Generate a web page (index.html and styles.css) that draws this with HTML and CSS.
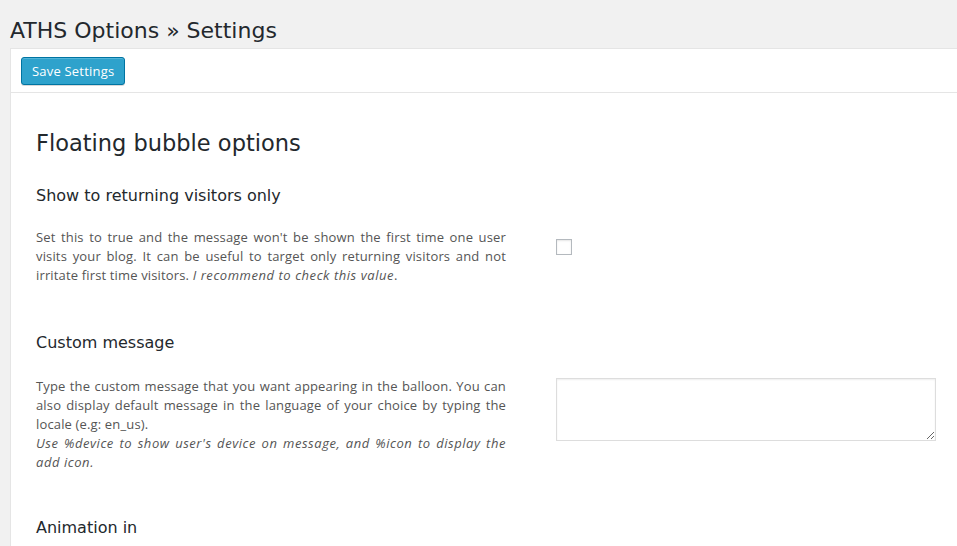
FILE: index.html
```html
<!DOCTYPE html>
<html>
<head>
<meta charset="utf-8">
<link rel="stylesheet" href="styles.css">
</head>
<body>
<div class="wrap">
  <h1 class="page-title">ATHS Options » Settings</h1>
  <div class="panel">
    <div class="toolbar">
      <button class="btn-primary">Save Settings</button>
    </div>
    <div class="content">
      <h2 class="section-title">Floating bubble options</h2>

      <h3 class="option-title">Show to returning visitors only</h3>
      <div class="option-row option-row-first">
        <p class="desc">Set this to true and the message won't be shown the first time one user visits your blog. It can be useful to target only returning visitors and not irritate first time visitors. <em>I recommend to check this value</em>.</p>
        <div class="control"><span class="checkbox"></span></div>
      </div>

      <h3 class="option-title option-title-spaced">Custom message</h3>
      <div class="option-row">
        <p class="desc">Type the custom message that you want appearing in the balloon. You can also display default message in the language of your choice by typing the locale (e.g: en_us).<br><em>Use %device to show user's device on message, and %icon to display the add icon.</em></p>
        <div class="control"><textarea class="textarea"></textarea></div>
      </div>

      <h3 class="option-title">Animation in</h3>
    </div>
  </div>
</div>
</body>
</html>
```

FILE: styles.css
```css
html, body {
  margin: 0;
  padding: 0;
  background: #f1f1f1;
  overflow: hidden;
}
body {
  font-family: "Open Sans", "Noto Sans", sans-serif;
  color: #444;
}
.wrap {
  padding-left: 10px;
}
.page-title {
  margin: 0;
  padding: 16px 0 3px 0;
  font-family: "DejaVu Sans", sans-serif;
  font-weight: 400;
  font-size: 22px;
  line-height: 29px;
  color: #23282d;
}
.panel {
  background: #fff;
  border-top: 1px solid #e5e5e5;
  border-left: 1px solid #e5e5e5;
  min-height: 600px;
}
.toolbar {
  padding: 8px 10px 7px 10px;
  border-bottom: 1px solid #e5e5e5;
}
.btn-primary {
  display: block;
  height: 28px;
  padding: 0 10px;
  background: #2ea2cc;
  border: 1px solid #0074a2;
  border-radius: 3px;
  box-shadow: inset 0 1px 0 rgba(120,200,230,0.5), 0 1px 0 rgba(0,0,0,0.15);
  color: #fff;
  font-family: "Open Sans", "Noto Sans", sans-serif;
  font-size: 13px;
  letter-spacing: 0.2px;
  line-height: 26px;
}
.content {
  padding: 35px 25px 0 25px;
}
.section-title {
  margin: 0 0 28px 0;
  font-family: "DejaVu Sans", sans-serif;
  font-weight: 400;
  font-size: 22.5px;
  line-height: 30px;
  color: #23282d;
}
.option-title {
  margin: 0 0 22px 0;
  font-family: "DejaVu Sans", sans-serif;
  font-weight: 400;
  font-size: 16px;
  line-height: 20px;
  color: #23282d;
}
.option-title-spaced {
  margin-bottom: 24px;
}
.option-row {
  display: grid;
  grid-template-columns: 470px 380px;
  column-gap: 50px;
  margin-bottom: 46px;
}
.option-row-first {
  margin-bottom: 48px;
}
.desc {
  margin: 0;
  font-size: 13px;
  letter-spacing: 0.15px;
  line-height: 19px;
  text-align: justify;
  color: #555;
}
.desc em {
  letter-spacing: 0.55px;
}
.control {
  padding-top: 11px;
}
.checkbox {
  display: block;
  width: 14px;
  height: 14px;
  border: 1px solid #b4b9be;
  background: #fff;
  box-shadow: inset 0 1px 2px rgba(0,0,0,0.1);
}
.textarea {
  display: block;
  box-sizing: border-box;
  width: 380px;
  height: 63px;
  margin-top: -10px;
  border: 1px solid #ddd;
  box-shadow: inset 0 1px 2px rgba(0,0,0,0.07);
  background: #fff;
  resize: both;
}
```
